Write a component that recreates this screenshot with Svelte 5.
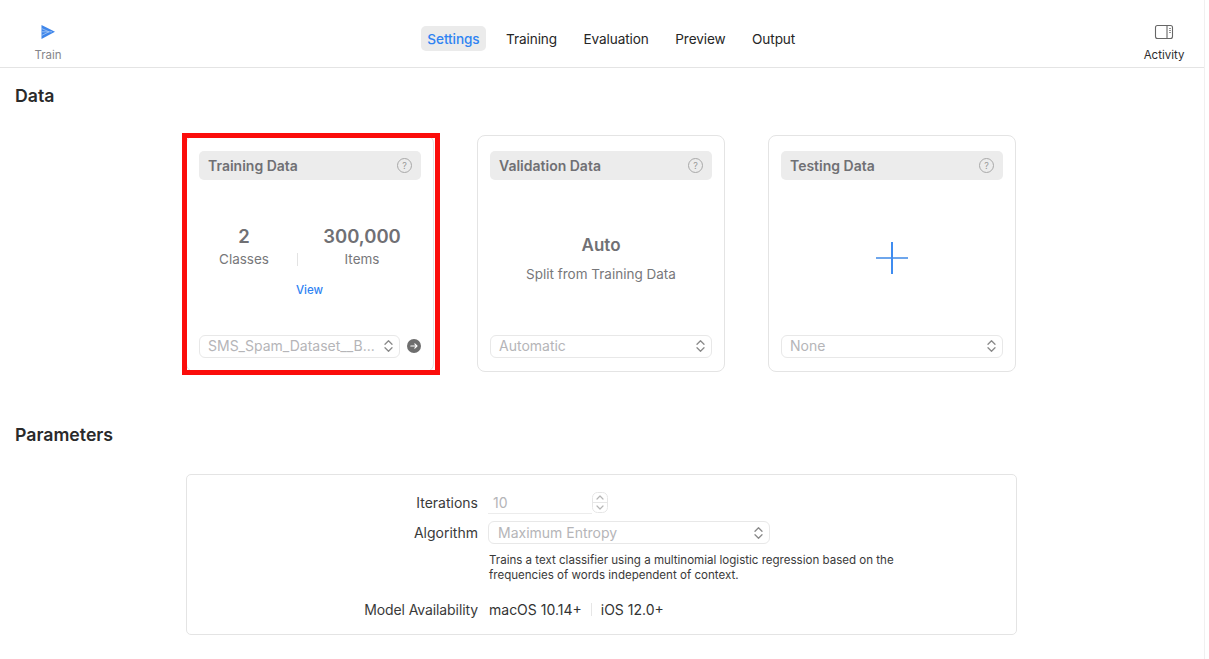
<script>
  const tabs = ['Settings', 'Training', 'Evaluation', 'Preview', 'Output'];
</script>

{#snippet updown()}
  <svg class="updown" width="9" height="14" viewBox="0 0 9 14" fill="none">
    <path d="M1 5.2L4.5 1.7L8 5.2M1 8.8L4.5 12.3L8 8.8" stroke="currentColor" stroke-width="1.3" stroke-linecap="round" stroke-linejoin="round"/>
  </svg>
{/snippet}

{#snippet cardHead(title)}
  <div class="card-head">
    <span>{title}</span>
    <span class="help">?</span>
  </div>
{/snippet}

<div class="window">
  <header class="toolbar">
    <div class="tool train">
      <svg width="16" height="16" viewBox="0 0 16 16">
        <path d="M1.5 1L15 7.8L1.5 15Z" fill="#3f86ea"/>
        <path d="M1.5 4.5L9 7.8L1.5 11.5M1.5 7.8H12" fill="none" stroke="#a9c9f5" stroke-width="0.8"/>
      </svg>
      <span>Train</span>
    </div>
    <nav class="tabs">
      {#each tabs as tab, i}
        <span class="tab" class:active={i === 0}>{tab}</span>
      {/each}
    </nav>
    <div class="tool activity">
      <svg width="20" height="16" viewBox="0 0 20 16" fill="none">
        <rect x="1.5" y="1.5" width="17" height="13" rx="2" stroke="#666" stroke-width="1.1"/>
        <path d="M13 1.5V14.5" stroke="#666" stroke-width="1.1"/>
        <path d="M15 4.5H17M15 6.5H17M15 8.5H17" stroke="#888" stroke-width="0.9"/>
      </svg>
      <span>Activity</span>
    </div>
  </header>

  <main>
    <h2 class="data-title">Data</h2>
    <div class="cards">
      <section class="card marked">
        {@render cardHead('Training Data')}
        <div class="card-body">
          <div class="stats">
            <div class="stat left">
              <strong>2</strong>
              <span>Classes</span>
            </div>
            <i class="divider"></i>
            <div class="stat right">
              <strong>300,000</strong>
              <span>Items</span>
            </div>
          </div>
          <a class="view" href="#top">View</a>
        </div>
        <div class="select-row">
          <div class="select">
            <span>SMS_Spam_Dataset__B...</span>
            {@render updown()}
          </div>
          <svg class="go" width="14" height="14" viewBox="0 0 14 14" fill="none">
            <circle cx="7" cy="7" r="7" fill="#6e6e6e"/>
            <path d="M3.8 7H10M7.8 4.8L10 7L7.8 9.2" stroke="#fff" stroke-width="1.1" stroke-linecap="round" stroke-linejoin="round"/>
          </svg>
        </div>
      </section>

      <section class="card">
        {@render cardHead('Validation Data')}
        <div class="card-body auto">
          <strong>Auto</strong>
          <span>Split from Training Data</span>
        </div>
        <div class="select-row">
          <div class="select">
            <span>Automatic</span>
            {@render updown()}
          </div>
        </div>
      </section>

      <section class="card">
        {@render cardHead('Testing Data')}
        <div class="card-body">
          <svg width="32" height="32" viewBox="0 0 32 32" fill="none">
            <path d="M0 16H32" stroke="#6ea6ec" stroke-width="2"/>
            <path d="M16 0V32" stroke="#3f8cf0" stroke-width="2"/>
          </svg>
        </div>
        <div class="select-row">
          <div class="select">
            <span>None</span>
            {@render updown()}
          </div>
        </div>
      </section>
    </div>

    <h2 class="params-title">Parameters</h2>
    <section class="params">
      <div class="label">Iterations</div>
      <div class="stepper-row">
        <span class="number">10</span>
        <svg class="stepper" width="16" height="21" viewBox="0 0 16 21" fill="none">
          <rect x="0.5" y="0.5" width="15" height="20" rx="5" stroke="#e6e6e6"/>
          <path d="M0.5 10.5H15.5" stroke="#e6e6e6"/>
          <path d="M5 7L8 4L11 7M5 14L8 17L11 14" stroke="#b5b5b5" stroke-width="1.2" stroke-linecap="round" stroke-linejoin="round"/>
        </svg>
      </div>
      <div class="label">Algorithm</div>
      <div>
        <div class="select algo">
          <span>Maximum Entropy</span>
          {@render updown()}
        </div>
        <p class="desc">Trains a text classifier using a multinomial logistic regression based on the<br>frequencies of words independent of context.</p>
      </div>
      <div class="label avail-label">Model Availability</div>
      <div class="avail">
        <span>macOS 10.14+</span>
        <i></i>
        <span>iOS 12.0+</span>
      </div>
    </section>
  </main>
</div>

<style>
  :global(body) {
    background: #fff;
    font-family: Inter, "Liberation Sans", sans-serif;
    color: #262626;
  }

  .window {
    width: 1205px;
    height: 659px;
    overflow: hidden;
    box-sizing: border-box;
    border-right: 1px solid #f0f0f0;
  }

  .toolbar {
    height: 68px;
    box-sizing: border-box;
    border-bottom: 1px solid #e4e4e4;
    display: grid;
    grid-template-columns: 96px 1fr 80px;
    align-items: start;
  }

  .tool {
    display: flex;
    flex-direction: column;
    align-items: center;
    gap: 8px;
    font-size: 11.5px;
    line-height: 14px;
    padding-top: 24px;
  }

  .train {
    color: #85858a;
  }

  .activity {
    color: #2c2c2c;
  }

  .tabs {
    display: flex;
    justify-content: center;
    gap: 6px;
    padding-top: 26px;
    padding-left: 11px;
    font-size: 13.6px;
    line-height: 24px;
    height: 25px;
  }

  .tab {
    padding: 1px 6px 0;
    margin-right: 8.5px;
    border-radius: 5px;
    letter-spacing: -0.1px;
  }

  .tab.active {
    background: #ebebeb;
    color: #2f83f2;
    font-weight: 500;
  }

  main {
    padding: 0 0 0 15px;
  }

  h2 {
    margin: 0;
    font-size: 17.7px;
    line-height: 22px;
    font-weight: 600;
    color: #2a2a2a;
  }

  .data-title {
    padding-top: 17px;
  }

  .params-title {
    margin-top: 52px;
  }

  .cards {
    display: flex;
    gap: 43px;
    margin: 28px 0 0 171px;
  }

  .card {
    position: relative;
    width: 248px;
    height: 237px;
    box-sizing: border-box;
    border: 1px solid #e4e4e4;
    border-radius: 8px;
    padding: 15px 12px 13px;
    display: flex;
    flex-direction: column;
  }

  /* red annotation drawn over the first card */
  .card.marked::after {
    content: '';
    position: absolute;
    left: -5px;
    top: -3px;
    width: 258px;
    height: 242px;
    box-sizing: border-box;
    border: 5px solid #fb0d0b;
    pointer-events: none;
  }

  .card-head {
    height: 29px;
    flex: none;
    background: #ececec;
    border-radius: 5px;
    padding: 0 9px;
    display: flex;
    align-items: center;
    justify-content: space-between;
    font-size: 14px;
    font-weight: 600;
    color: #707074;
  }

  .help {
    width: 13px;
    height: 13px;
    border: 1px solid #a8a8a8;
    border-radius: 50%;
    font-size: 9px;
    line-height: 13px;
    font-weight: 400;
    text-align: center;
    color: #999;
  }

  .card-body {
    flex: 1;
    display: flex;
    flex-direction: column;
    align-items: center;
    justify-content: center;
  }

  .stats {
    align-self: stretch;
    display: flex;
    align-items: flex-end;
    padding-top: 6px;
  }

  .stat {
    display: flex;
    flex-direction: column;
    align-items: center;
    gap: 3px;
    color: #77777a;
    font-size: 13.5px;
  }

  .stat.left {
    width: 90px;
    margin-right: 8px;
  }

  .stat.right {
    flex: 1;
    padding-left: 5px;
  }

  .stat strong {
    font-size: 18.5px;
    line-height: 24px;
    font-weight: 600;
    color: #707074;
  }

  .divider {
    width: 1px;
    height: 13px;
    margin-bottom: 1px;
    background: #e3e3e3;
  }

  .view {
    font-size: 11.5px;
    font-weight: 500;
    line-height: 14px;
    margin-top: 16px;
    color: #2f83f2;
    text-decoration: none;
    padding-right: 1px;
  }

  .auto {
    color: #77777a;
    font-size: 13.5px;
    gap: 10px;
    padding-top: 2px;
  }

  .auto strong {
    font-size: 17px;
    line-height: 21px;
    font-weight: 600;
    color: #707074;
  }

  .select-row {
    display: flex;
    align-items: center;
    gap: 8px;
  }

  .go {
    margin: 0 0 2px -1px;
  }

  .select {
    flex: 1;
    height: 23px;
    box-sizing: border-box;
    border: 1px solid #e8e8e8;
    border-radius: 6px;
    padding: 0 6px 2px 8px;
    display: flex;
    align-items: center;
    justify-content: space-between;
    font-size: 14px;
    color: #b5b5b8;
    white-space: nowrap;
  }

  .updown {
    flex: none;
    color: #8a8a8a;
  }

  .params {
    margin: 28px 0 0 171px;
    width: 831px;
    height: 161px;
    box-sizing: border-box;
    border: 1px solid #e4e4e4;
    border-radius: 5px;
    padding: 16px 0 0;
    display: grid;
    grid-template-columns: 291px 1fr;
    column-gap: 10px;
    grid-auto-rows: min-content;
    row-gap: 7px;
    font-size: 14px;
  }

  .label {
    text-align: right;
    line-height: 23px;
    color: #3a3a3a;
  }

  .stepper-row {
    display: flex;
    align-items: center;
    height: 23px;
  }

  .number {
    width: 104px;
    height: 22px;
    box-sizing: border-box;
    padding-left: 5px;
    line-height: 21px;
    border-bottom: 1px solid #ececec;
    color: #b5b5b8;
  }

  .select.algo {
    width: 282px;
    flex: none;
    padding: 0 6px 0 9px;
  }

  .desc {
    margin: 9px 0 0 1px;
    font-size: 11.55px;
    line-height: 15px;
    color: #3a3a3a;
  }

  .avail-label {
    margin-top: 8px;
    letter-spacing: -0.1px;
  }

  .avail {
    display: flex;
    align-items: center;
    gap: 9px;
    margin: 8px 0 0 1px;
    height: 23px;
    color: #333;
  }

  .avail i {
    width: 1px;
    height: 13px;
    background: #e6e6e6;
  }
</style>
